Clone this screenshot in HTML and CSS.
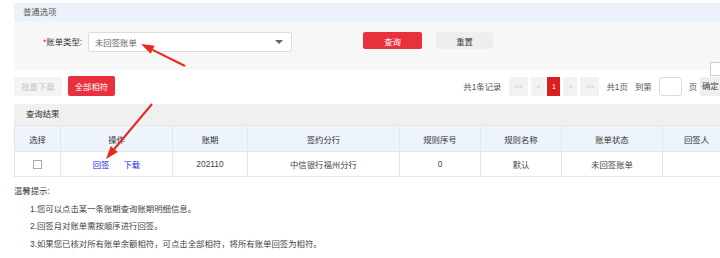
FILE: index.html
```html
<!DOCTYPE html>
<html lang="zh-CN">
<head>
    <meta charset="UTF-8">
    <meta name="viewport" content="width=device-width, initial-scale=1.0">
    <title>账单查询</title>
    <link rel="stylesheet" href="styles.css">
</head>
<body>
    <div class="panel">
        <div class="panel-title">普通选项</div>
        <div class="form-area">
            <label class="field-label"><span class="req">*</span>账单类型:</label>
            <div class="select">
                <span>未回签账单</span>
                <span class="caret"></span>
            </div>
            <button type="button" class="btn btn-red btn-query">查询</button>
            <button type="button" class="btn btn-gray btn-reset">重置</button>
        </div>

        <div class="toolbar">
            <button type="button" class="btn btn-disabled btn-batch">批量下载</button>
            <button type="button" class="btn btn-red btn-all">全部相符</button>
            <div class="pager">
                <span class="pager-text">共1条记录</span>
                <span class="page-btn wide first">&lt;&lt;</span>
                <span class="page-btn">&lt;</span>
                <span class="page-btn current">1</span>
                <span class="page-btn">&gt;</span>
                <span class="page-btn wide">&gt;&gt;</span>
                <span class="pager-text gap">共1页</span>
                <span class="pager-text gap">到第</span>
                <span class="page-input"></span>
                <span class="pager-text gap">页</span>
                <span class="page-go">确定</span>
            </div>
        </div>
        <span class="corner-box"></span>

        <div class="result-title">查询结果</div>
        <table class="grid">
            <colgroup>
                <col style="width:46px">
                <col style="width:112px">
                <col style="width:75px">
                <col style="width:152px">
                <col style="width:81px">
                <col style="width:81px">
                <col style="width:101px">
                <col style="width:68px">
            </colgroup>
            <thead>
                <tr>
                    <th>选择</th>
                    <th>操作</th>
                    <th>账期</th>
                    <th>签约分行</th>
                    <th>规则序号</th>
                    <th>规则名称</th>
                    <th>账单状态</th>
                    <th>回签人</th>
                </tr>
            </thead>
            <tbody>
                <tr>
                    <td><span class="check"></span></td>
                    <td><a class="link">回签</a><a class="link">下载</a></td>
                    <td>202110</td>
                    <td>中信银行福州分行</td>
                    <td>0</td>
                    <td>默认</td>
                    <td>未回签账单</td>
                    <td></td>
                </tr>
            </tbody>
        </table>
    </div>

    <div class="tips">
        <p class="tips-head">温馨提示:</p>
        <p>1.您可以点击某一条账期查询账期明细信息。</p>
        <p>2.回签月对账单需按顺序进行回签。</p>
        <p>3.如果您已核对所有账单余额相符，可点击全部相符，将所有账单回签为相符。</p>
    </div>

    <!-- annotation arrows -->
    <svg class="marks" width="720" height="258" viewBox="0 0 720 258">
        <line x1="185" y1="66" x2="152.6" y2="49.8" stroke="#e8291c" stroke-width="2"/>
        <polygon points="141,44 154.6,45.8 150.6,53.8" fill="#e8291c"/>
        <line x1="152" y1="104" x2="114.3" y2="149" stroke="#e8291c" stroke-width="2"/>
        <polygon points="106,159 117.8,151.9 110.8,146.1" fill="#e8291c"/>
    </svg>
</body>
</html>
```

FILE: styles.css
```css
body {
    margin: 0;
    width: 720px;
    height: 258px;
    overflow: hidden;
    position: relative;
    background-color: #fff;
    font-family: "Liberation Sans", "Noto Sans CJK SC", sans-serif;
    font-size: 8.4px;
    color: #444;
}

.panel {
    position: relative;
    width: 716px;
    margin: 3px 0 0 14px;
}

.panel-title {
    height: 18px;
    line-height: 18px;
    padding-left: 9px;
    background-color: #ebf2fa;
    color: #555;
}

.form-area {
    display: flex;
    align-items: flex-start;
    height: 38px;
    padding-top: 11px;
    background-color: #f7f7f7;
}

.field-label {
    margin-left: 29px;
    width: 45px;
    line-height: 20px;
    color: #333;
}

.req {
    color: #e8291c;
}

.select {
    display: flex;
    align-items: center;
    justify-content: space-between;
    box-sizing: border-box;
    width: 204px;
    height: 20px;
    padding: 0 8px 0 6px;
    background-color: #fff;
    border: 1px solid #dcdcdc;
    border-radius: 2px;
    color: #666;
}

.caret {
    width: 0;
    height: 0;
    border-left: 4px solid transparent;
    border-right: 4px solid transparent;
    border-top: 4px solid #666;
}

.btn {
    box-sizing: border-box;
    height: 17px;
    padding: 0;
    border: none;
    border-radius: 2px;
    font-family: inherit;
    font-size: 8.4px;
}

.btn-red {
    background-color: #e9303d;
    color: #fff;
}

.btn-gray {
    background-color: #eeeeee;
    color: #444;
}

.btn-query {
    width: 59px;
    margin-left: 71px;
}

.btn-reset {
    width: 57px;
    margin-left: 14px;
}

.toolbar {
    display: flex;
    align-items: center;
    height: 20px;
    margin-top: 6px;
}

.btn-batch {
    width: 48px;
    height: 19px;
}

.btn-disabled {
    background-color: #f4f4f4;
    color: #c4c4c4;
}

.btn-all {
    width: 47px;
    height: 20px;
    margin-left: 6px;
}

.pager {
    display: flex;
    align-items: center;
    margin-left: auto;
    color: #555;
}

.pager-text.gap {
    margin-left: 7px;
}

.page-btn {
    width: 14px;
    height: 19px;
    line-height: 19px;
    margin-left: 3px;
    text-align: center;
    background-color: #f2f2f2;
    color: #c8c8c8;
    font-size: 7px;
}

.page-btn.wide {
    width: 19px;
}

.page-btn.first {
    margin-left: 8px;
}

.page-btn.current {
    width: 13px;
    margin-left: 2px;
    background-color: #d91e1e;
    color: #fff;
}

.page-input {
    box-sizing: border-box;
    width: 23px;
    height: 19px;
    margin-left: 7px;
    background-color: #fff;
    border: 1px solid #dcdcdc;
    border-radius: 3px;
}

.page-go {
    box-sizing: border-box;
    width: 30px;
    height: 19px;
    line-height: 19px;
    margin-left: 3px;
    padding-left: 2px;
    background-color: #eeeeee;
    color: #444;
}

.corner-box {
    position: absolute;
    top: 59px;
    left: 696px;
    width: 14px;
    height: 12px;
    background-color: #fff;
    border: 1px solid #ccc;
}

.result-title {
    height: 21px;
    line-height: 21px;
    margin-top: 8px;
    padding-left: 12px;
    background-color: #f0f0f0;
    color: #333;
}

.grid {
    width: 716px;
    table-layout: fixed;
    border-collapse: collapse;
}

.grid th,
.grid td {
    border: 1px solid #e6e6e6;
    text-align: center;
    padding: 0;
}

.grid th {
    height: 25px;
    background-color: #edf4fb;
    font-weight: normal;
    color: #333;
}

.grid td {
    height: 24px;
    color: #444;
}

.check {
    display: inline-block;
    box-sizing: border-box;
    width: 9px;
    height: 9px;
    vertical-align: middle;
    border: 1px solid #aaa;
    background-color: #fff;
}

.link {
    color: #2727e8;
    margin: 0 7px;
}

.tips {
    margin: 6px 0 0 14px;
    color: #444;
}

.tips p {
    margin: 0 0 0 16px;
    line-height: 17.7px;
}

.tips .tips-head {
    margin-left: 0;
}

.marks {
    position: absolute;
    top: 0;
    left: 0;
    pointer-events: none;
}
```
